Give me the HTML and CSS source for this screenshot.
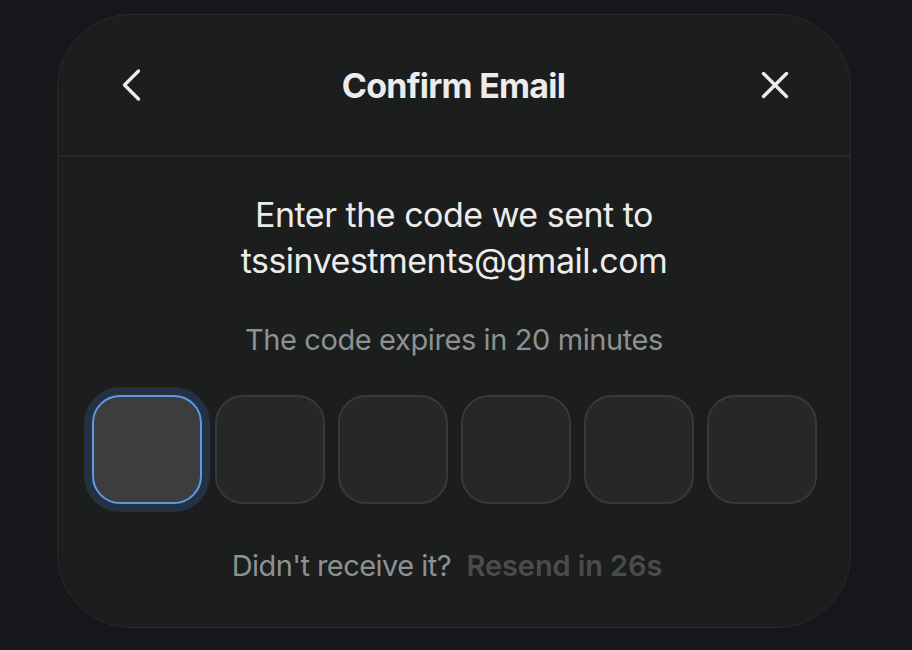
FILE: index.html
```html
<!DOCTYPE html>
<html>
<head>
<meta charset="utf-8">
<link rel="stylesheet" href="styles.css">
</head>
<body>
<div class="card">
  <div class="header">
    <button class="icon-btn" aria-label="Back">
      <svg width="28" height="34" viewBox="0 0 28 34"><path d="M20.5 3 L6.5 17 L20.5 31" fill="none" stroke="#ececec" stroke-width="3.4" stroke-linecap="round" stroke-linejoin="round"/></svg>
    </button>
    <h1 class="title">Confirm Email</h1>
    <button class="icon-btn" aria-label="Close">
      <svg width="28" height="28" viewBox="0 0 28 28"><path d="M2.5 2.5 L25.5 25.5 M25.5 2.5 L2.5 25.5" fill="none" stroke="#ececec" stroke-width="3.4" stroke-linecap="round"/></svg>
    </button>
  </div>
  <div class="body">
    <p class="lead">Enter the code we sent to<br>tssinvestments@gmail.com</p>
    <p class="expires">The code expires in 20 minutes</p>
    <div class="codes">
      <div class="code focused"></div>
      <div class="code"></div>
      <div class="code"></div>
      <div class="code"></div>
      <div class="code"></div>
      <div class="code"></div>
    </div>
    <p class="resend">Didn't receive it? <span class="resend-link">Resend in 26s</span></p>
  </div>
</div>
</body>
</html>
```
FILE: styles.css
```css
* { box-sizing: border-box; }
html, body { margin: 0; padding: 0; }
body {
  background: #16171b;
  font-family: Inter, "Noto Sans", sans-serif;
  width: 912px;
  height: 650px;
  overflow: hidden;
}
.card {
  margin: 14px 0 0 57px;
  width: 794px;
  height: 614px;
  background: #1c1d1d;
  border: 1px solid #27292a;
  border-radius: 74px;
  display: flex;
  flex-direction: column;
}
.header {
  height: 142px;
  flex: none;
  border-bottom: 2px solid #28292a;
  display: flex;
  align-items: center;
  justify-content: space-between;
  padding: 0 61px 0 60px;
}
.icon-btn {
  background: none;
  border: none;
  padding: 0;
  width: 28px;
  height: 34px;
  display: flex;
  align-items: center;
  justify-content: center;
}
.title {
  margin: 0 0 -2px;
  font-size: 34px;
  line-height: 40px;
  font-weight: 700;
  color: #ececec;
  letter-spacing: -0.75px;
}
.body {
  display: flex;
  flex-direction: column;
  align-items: center;
  padding-top: 35px;
}
.lead {
  margin: 0;
  text-align: center;
  font-size: 34px;
  line-height: 46px;
  color: #ececec;
  letter-spacing: -0.5px;
}
.expires {
  margin: 36px 0 0;
  font-size: 29px;
  line-height: 40px;
  color: #8c9292;
  letter-spacing: -0.4px;
}
.codes {
  margin-top: 35px;
  display: flex;
  gap: 13px;
}
.code {
  width: 110px;
  height: 109px;
  border-radius: 28px;
  background: #262727;
  border: 2px solid #383939;
}
.code.focused {
  background: #3d3d3d;
  border-color: #5b9be6;
  box-shadow: 0 0 0 8px #243142;
}
.resend {
  margin: 42px 14px 0 0;
  font-size: 29px;
  line-height: 40px;
  color: #8c9292;
  letter-spacing: -0.55px;
}
.resend-link {
  margin-left: 8px;
  color: #4a4c4c;
  font-weight: 600;
  letter-spacing: -0.1px;
}
```
